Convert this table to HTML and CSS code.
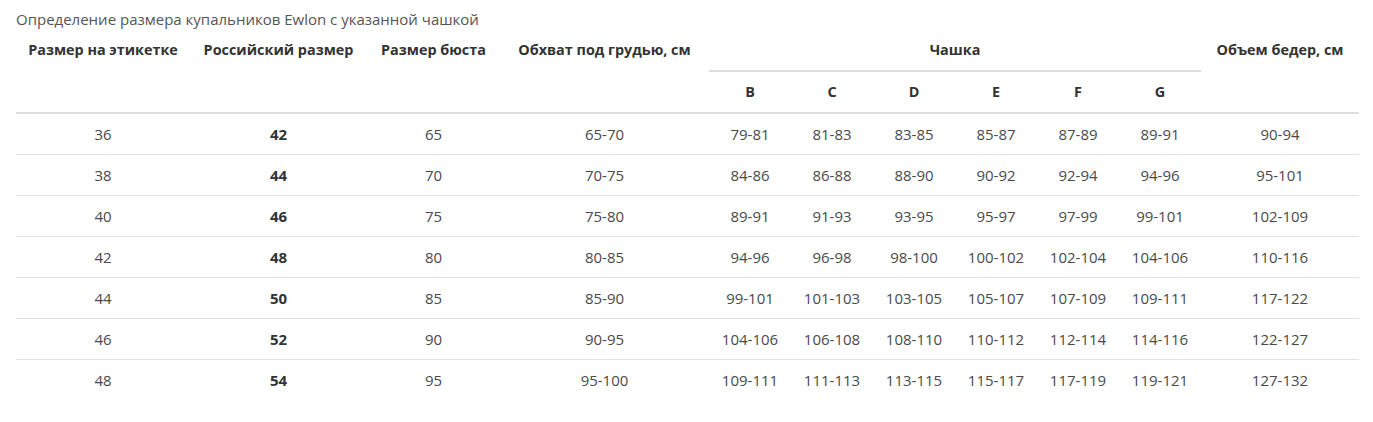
FILE: index.html
```html
<!DOCTYPE html>
<html lang="ru">
<head>
<meta charset="utf-8">
<link rel="stylesheet" href="styles.css">
</head>
<body>
<div class="wrap">
  <div class="caption">Определение размера купальников Ewlon с указанной чашкой</div>
  <table class="sizes">
    <colgroup>
      <col class="c1"><col class="c2"><col class="c3"><col class="c4">
      <col class="cup"><col class="cup"><col class="cup"><col class="cup"><col class="cup"><col class="cup">
      <col class="c11">
    </colgroup>
    <thead>
      <tr>
        <th rowspan="2" class="span">Размер на этикетке</th>
        <th rowspan="2" class="span">Российский размер</th>
        <th rowspan="2" class="span">Размер бюста</th>
        <th rowspan="2" class="span">Обхват под грудью, см</th>
        <th colspan="6" class="group">Чашка</th>
        <th rowspan="2" class="span">Объем бедер, см</th>
      </tr>
      <tr>
        <th class="sub">B</th><th class="sub">C</th><th class="sub">D</th><th class="sub">E</th><th class="sub">F</th><th class="sub">G</th>
      </tr>
    </thead>
    <tbody>
      <tr><td>36</td><td class="b">42</td><td>65</td><td>65-70</td><td>79-81</td><td>81-83</td><td>83-85</td><td>85-87</td><td>87-89</td><td>89-91</td><td>90-94</td></tr>
      <tr><td>38</td><td class="b">44</td><td>70</td><td>70-75</td><td>84-86</td><td>86-88</td><td>88-90</td><td>90-92</td><td>92-94</td><td>94-96</td><td>95-101</td></tr>
      <tr><td>40</td><td class="b">46</td><td>75</td><td>75-80</td><td>89-91</td><td>91-93</td><td>93-95</td><td>95-97</td><td>97-99</td><td>99-101</td><td>102-109</td></tr>
      <tr><td>42</td><td class="b">48</td><td>80</td><td>80-85</td><td>94-96</td><td>96-98</td><td>98-100</td><td>100-102</td><td>102-104</td><td>104-106</td><td>110-116</td></tr>
      <tr><td>44</td><td class="b">50</td><td>85</td><td>85-90</td><td>99-101</td><td>101-103</td><td>103-105</td><td>105-107</td><td>107-109</td><td>109-111</td><td>117-122</td></tr>
      <tr><td>46</td><td class="b">52</td><td>90</td><td>90-95</td><td>104-106</td><td>106-108</td><td>108-110</td><td>110-112</td><td>112-114</td><td>114-116</td><td>122-127</td></tr>
      <tr><td>48</td><td class="b">54</td><td>95</td><td>95-100</td><td>109-111</td><td>111-113</td><td>113-115</td><td>115-117</td><td>117-119</td><td>119-121</td><td>127-132</td></tr>
    </tbody>
  </table>
</div>
</body>
</html>
```
FILE: styles.css
```css
html, body {
  margin: 0;
  padding: 0;
  background: #fff;
}
body {
  font-family: "Open Sans", "Noto Sans", sans-serif;
  font-size: 15px;
  color: #444;
}
.wrap {
  padding: 8px 14px 0 16px;
}
.caption {
  font-size: 15px;
  line-height: 22px;
  color: #555;
}
.sizes {
  width: 1343px;
  table-layout: fixed;
  border-collapse: separate;
  border-spacing: 0;
}
.c1 { width: 174px; }
.c2 { width: 177px; }
.c3 { width: 133px; }
.c4 { width: 209px; }
.cup { width: 82px; }
.c11 { width: 158px; }
.sizes th,
.sizes td {
  padding: 10px 0;
  line-height: 20px;
  text-align: center;
  white-space: nowrap;
}
.sizes th {
  font-size: 14.4px;
  font-weight: 700;
  color: #333;
}
.sizes th.span {
  vertical-align: top;
  border-bottom: 2px solid #dddddd;
}
.sizes th.group,
.sizes th.sub {
  border-bottom: 2px solid #dddddd;
}
.sizes td {
  font-size: 15px;
  font-weight: 400;
  color: #4a4a4a;
  border-bottom: 1px solid #e2e2e2;
}
.sizes tbody tr:last-child td {
  border-bottom: 0;
}
.sizes td.b {
  font-weight: 700;
  color: #333;
}
```
